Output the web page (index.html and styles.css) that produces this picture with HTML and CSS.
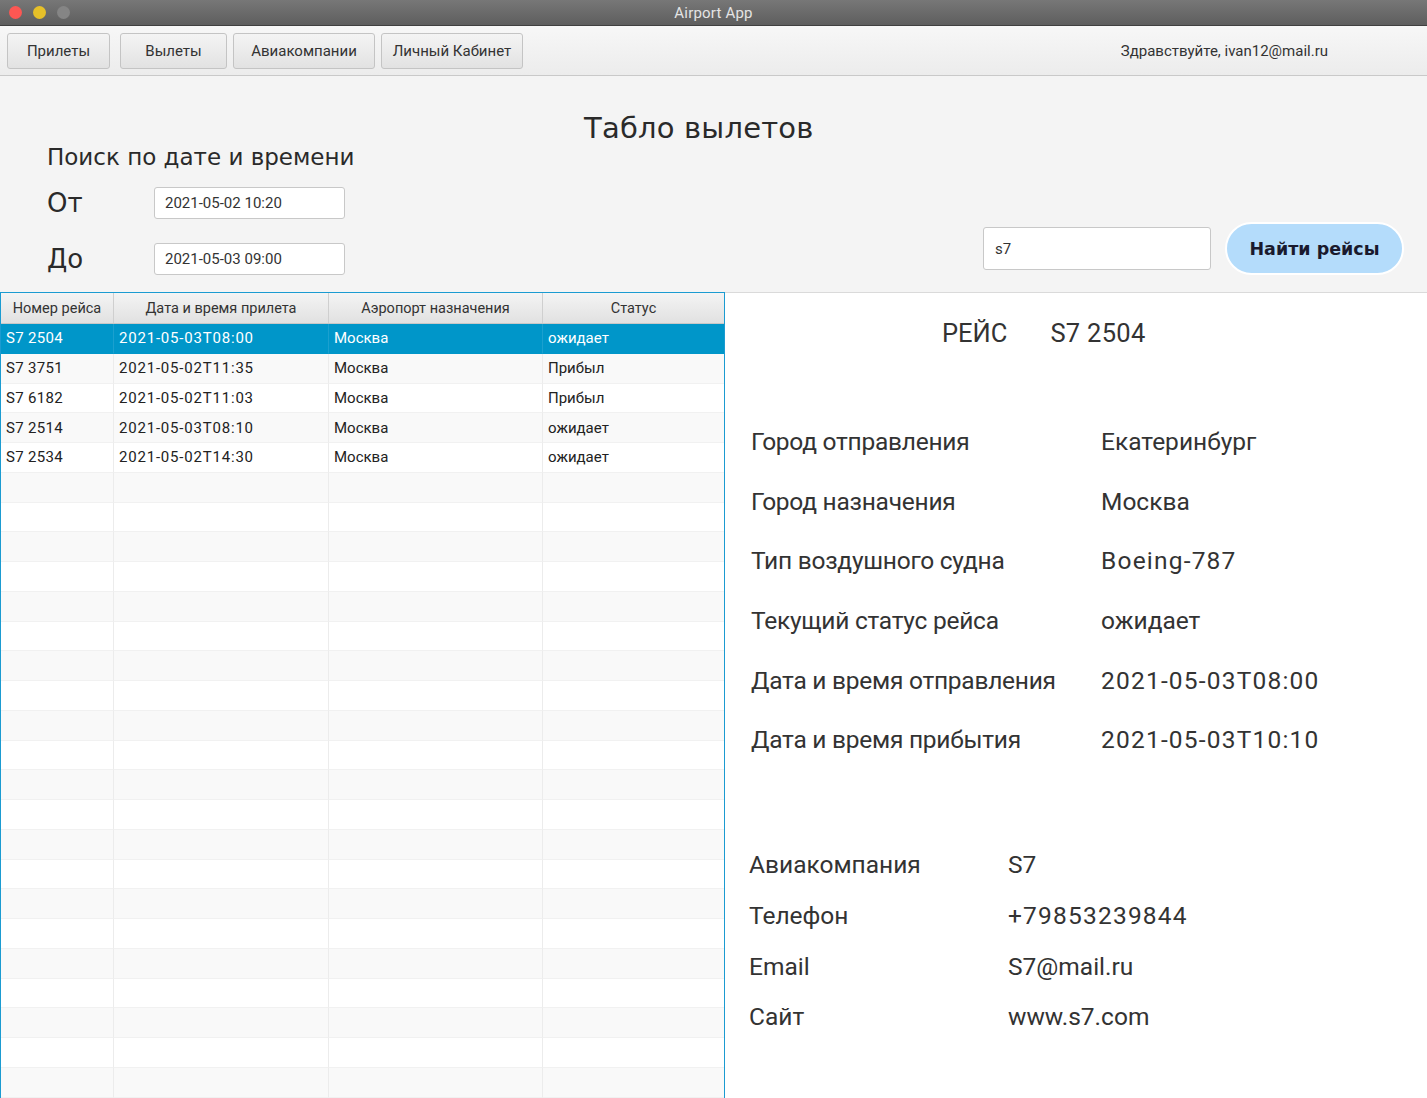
FILE: index.html
```html
<!DOCTYPE html>
<html lang="ru">
<head>
<meta charset="utf-8">
<title>Airport App</title>
<link rel="stylesheet" href="styles.css">
</head>
<body>
<div class="window">
  <div class="titlebar">
    <div class="lights">
      <span class="light red"></span>
      <span class="light yellow"></span>
      <span class="light gray"></span>
    </div>
    <div class="wtitle">Airport App</div>
  </div>
  <div class="toolbar">
    <button class="tbtn b1">Прилеты</button>
    <button class="tbtn b2">Вылеты</button>
    <button class="tbtn b3">Авиакомпании</button>
    <button class="tbtn b4">Личный Кабинет</button>
    <div class="greet">Здравствуйте, ivan12@mail.ru</div>
  </div>
  <div class="top">
    <div class="search-date">
      <div class="hand h-search">Поиск по дате и времени</div>
      <div class="frow">
        <div class="hand flabel">От</div>
        <div class="field">2021-05-02 10:20</div>
      </div>
      <div class="frow">
        <div class="hand flabel">До</div>
        <div class="field">2021-05-03 09:00</div>
      </div>
    </div>
    <div class="hand board-title">Табло вылетов</div>
    <div class="search-flight">
      <div class="sfield">s7</div>
      <button class="hand find">Найти рейсы</button>
    </div>
  </div>
  <div class="main">
    <div class="table">
      <div class="thead">
        <div class="th">Номер рейса</div>
        <div class="th">Дата и время прилета</div>
        <div class="th">Аэропорт назначения</div>
        <div class="th">Статус</div>
      </div>
      <div class="tbody">
        <div class="tr sel"><div class="td n">S7 2504</div><div class="td d">2021-05-03T08:00</div><div class="td">Москва</div><div class="td">ожидает</div></div>
        <div class="tr"><div class="td n">S7 3751</div><div class="td d">2021-05-02T11:35</div><div class="td">Москва</div><div class="td">Прибыл</div></div>
        <div class="tr"><div class="td n">S7 6182</div><div class="td d">2021-05-02T11:03</div><div class="td">Москва</div><div class="td">Прибыл</div></div>
        <div class="tr"><div class="td n">S7 2514</div><div class="td d">2021-05-03T08:10</div><div class="td">Москва</div><div class="td">ожидает</div></div>
        <div class="tr"><div class="td n">S7 2534</div><div class="td d">2021-05-02T14:30</div><div class="td">Москва</div><div class="td">ожидает</div></div>
        <div class="tr"><div class="td"></div><div class="td"></div><div class="td"></div><div class="td"></div></div>
        <div class="tr"><div class="td"></div><div class="td"></div><div class="td"></div><div class="td"></div></div>
        <div class="tr"><div class="td"></div><div class="td"></div><div class="td"></div><div class="td"></div></div>
        <div class="tr"><div class="td"></div><div class="td"></div><div class="td"></div><div class="td"></div></div>
        <div class="tr"><div class="td"></div><div class="td"></div><div class="td"></div><div class="td"></div></div>
        <div class="tr"><div class="td"></div><div class="td"></div><div class="td"></div><div class="td"></div></div>
        <div class="tr"><div class="td"></div><div class="td"></div><div class="td"></div><div class="td"></div></div>
        <div class="tr"><div class="td"></div><div class="td"></div><div class="td"></div><div class="td"></div></div>
        <div class="tr"><div class="td"></div><div class="td"></div><div class="td"></div><div class="td"></div></div>
        <div class="tr"><div class="td"></div><div class="td"></div><div class="td"></div><div class="td"></div></div>
        <div class="tr"><div class="td"></div><div class="td"></div><div class="td"></div><div class="td"></div></div>
        <div class="tr"><div class="td"></div><div class="td"></div><div class="td"></div><div class="td"></div></div>
        <div class="tr"><div class="td"></div><div class="td"></div><div class="td"></div><div class="td"></div></div>
        <div class="tr"><div class="td"></div><div class="td"></div><div class="td"></div><div class="td"></div></div>
        <div class="tr"><div class="td"></div><div class="td"></div><div class="td"></div><div class="td"></div></div>
        <div class="tr"><div class="td"></div><div class="td"></div><div class="td"></div><div class="td"></div></div>
        <div class="tr"><div class="td"></div><div class="td"></div><div class="td"></div><div class="td"></div></div>
        <div class="tr"><div class="td"></div><div class="td"></div><div class="td"></div><div class="td"></div></div>
        <div class="tr"><div class="td"></div><div class="td"></div><div class="td"></div><div class="td"></div></div>
        <div class="tr"><div class="td"></div><div class="td"></div><div class="td"></div><div class="td"></div></div>
        <div class="tr"><div class="td"></div><div class="td"></div><div class="td"></div><div class="td"></div></div>
        <div class="tr"><div class="td"></div><div class="td"></div><div class="td"></div><div class="td"></div></div>
      </div>
    </div>
    <div class="details">
      <div class="flight-head">
        <span>РЕЙС</span>
        <span class="num">S7 2504</span>
      </div>
      <div class="info">
        <div>Город отправления</div><div>Екатеринбург</div>
        <div>Город назначения</div><div>Москва</div>
        <div>Тип воздушного судна</div><div class="num">Boeing-787</div>
        <div>Текущий статус рейса</div><div>ожидает</div>
        <div>Дата и время отправления</div><div class="num">2021-05-03T08:00</div>
        <div>Дата и время прибытия</div><div class="num">2021-05-03T10:10</div>
      </div>
      <div class="company">
        <div>Авиакомпания</div><div>S7</div>
        <div>Телефон</div><div class="num">+79853239844</div>
        <div>Email</div><div>S7@mail.ru</div>
        <div>Сайт</div><div>www.s7.com</div>
      </div>
    </div>
  </div>
</div>
</body>
</html>
```

FILE: styles.css
```css
* { box-sizing: border-box; }
html, body { margin: 0; padding: 0; }
body {
  width: 1427px;
  height: 1098px;
  overflow: hidden;
  font-family: Roboto, "Liberation Sans", sans-serif;
  color: #333;
  background: #f4f4f4;
}
.window { display: flex; flex-direction: column; height: 1098px; }

.titlebar {
  height: 26px;
  flex: none;
  background: linear-gradient(#777, #5e5e5e);
  display: flex;
  align-items: center;
  border-bottom: 1px solid #404040;
}
.lights { display: flex; gap: 11px; padding-left: 9px; width: 200px; }
.light { width: 13px; height: 13px; border-radius: 50%; display: block; }
.red { background: #fc5753; }
.yellow { background: #e6c029; }
.gray { background: #858585; }
.wtitle {
  flex: 1;
  text-align: center;
  color: #e4e4e4;
  font-size: 15px;
  margin-right: 200px;
  letter-spacing: 0.2px;
}

.toolbar {
  height: 50px;
  flex: none;
  background: linear-gradient(#f7f7f7, #ececec);
  border-bottom: 1px solid #c9c9c9;
  display: flex;
  align-items: center;
  padding-left: 7px;
}
.tbtn {
  height: 36px;
  margin-right: 10px;
  border: 1px solid #c4c4c4;
  border-radius: 3px;
  background: linear-gradient(#f4f4f4, #e2e2e2);
  font-family: Roboto, sans-serif;
  font-size: 15px;
  color: #333;
  padding: 0;
  margin-top: 1px;
}
.b1 { width: 103px; }
.b2 { width: 107px; margin-right: 6px; }
.b3 { width: 142px; margin-right: 6px; }
.b4 { width: 142px; }
.greet {
  margin-left: auto;
  margin-right: 99px;
  font-size: 15px;
  color: #333;
  margin-top: 1px;
}

.hand {
  font-family: "DejaVu Sans", sans-serif;
  color: #2a2a2a;
}

.top {
  height: 216px;
  flex: none;
  display: grid;
  grid-template-columns: 584px auto 1fr;
  background: #f4f4f4;
}
.search-date { padding: 67px 0 0 47px; }
.h-search { font-size: 23px; line-height: 28px; margin-bottom: 16px; }
.frow { display: flex; align-items: center; height: 32px; margin-bottom: 24px; }
.flabel { width: 107px; font-size: 26px; }
.field, .sfield {
  background: #fff;
  border: 1px solid #c8c8c8;
  border-radius: 3px;
  font-size: 15px;
  color: #333;
  display: flex;
  align-items: center;
}
.field { width: 191px; height: 32px; padding-left: 10px; }

.board-title {
  font-size: 29px;
  line-height: 36px;
  padding-top: 34px;
  letter-spacing: 0.2px;
}

.search-flight {
  display: flex;
  align-items: center;
  justify-content: flex-end;
  padding: 0 23px 24px 0;
  align-self: end;
}
.sfield { width: 228px; height: 43px; padding-left: 11px; margin-right: 14px; }
.find {
  width: 179px;
  height: 53px;
  border-radius: 27px;
  border: 2px solid #fff;
  background: #b4dcfb;
  font-size: 17.5px;
  font-weight: bold;
  color: #1a1a2e;
  padding: 0;
}

.main {
  flex: 1;
  display: grid;
  grid-template-columns: 725px 1fr;
  min-height: 0;
}
.table {
  border: 1px solid #1b9bd1;
  border-bottom: none;
  box-shadow: inset 0 0 0 1px #b5deef;
  background: #fff;
  display: flex;
  flex-direction: column;
  overflow: hidden;
}
.thead, .tr {
  display: grid;
  grid-template-columns: 113px 215px 214px 1fr;
  flex: none;
}
.thead {
  height: 31px;
  background: linear-gradient(#f4f4f4, #e1e1e1);
  border-bottom: 1px solid #c8c8c8;
}
.th {
  font-size: 14.5px;
  color: #333;
  display: flex;
  align-items: center;
  justify-content: center;
  border-right: 1px solid #cfcfcf;
}
.th:last-child { border-right: none; }
.tbody { display: flex; flex-direction: column; flex: none; }
.tr { height: 29.75px; background: #fff; }
.tr:nth-child(even) { background: #f9f9f9; }
.td {
  font-size: 15px;
  display: flex;
  align-items: center;
  padding-left: 5px;
  border-right: 1px solid #ececec;
  border-bottom: 1px solid #f1f1f1;
  color: #222;
}
.td.d { letter-spacing: 0.8px; }
.td.n { letter-spacing: 0.3px; }
.td:last-child { border-right: none; }
.tr.sel { background: #0096c9; }
.tr.sel .td { color: #fff; border-right-color: #1ba0cf; border-bottom-color: #0096c9; }

.details {
  background: #fff;
  border-top: 1px solid #dadada;
  padding-top: 22px;
}
.flight-head {
  display: flex;
  gap: 43px;
  padding-left: 217px;
  font-size: 25.5px;
  color: #333;
  height: 36px;
  align-items: center;
}
.num { letter-spacing: 1.2px; }
.flight-head .num { letter-spacing: 0.3px; }
.info {
  display: grid;
  grid-template-columns: 350px 1fr;
  grid-auto-rows: 59.6px;
  align-items: center;
  padding-left: 26px;
  margin-top: 61px;
  font-size: 24.5px;
  color: #333;
}
.info > div:nth-child(odd) { letter-spacing: -0.25px; }
.company {
  display: grid;
  grid-template-columns: 259px 1fr;
  grid-auto-rows: 50.7px;
  align-items: center;
  padding-left: 24px;
  margin-top: 70px;
  font-size: 24.5px;
  color: #333;
}
```
